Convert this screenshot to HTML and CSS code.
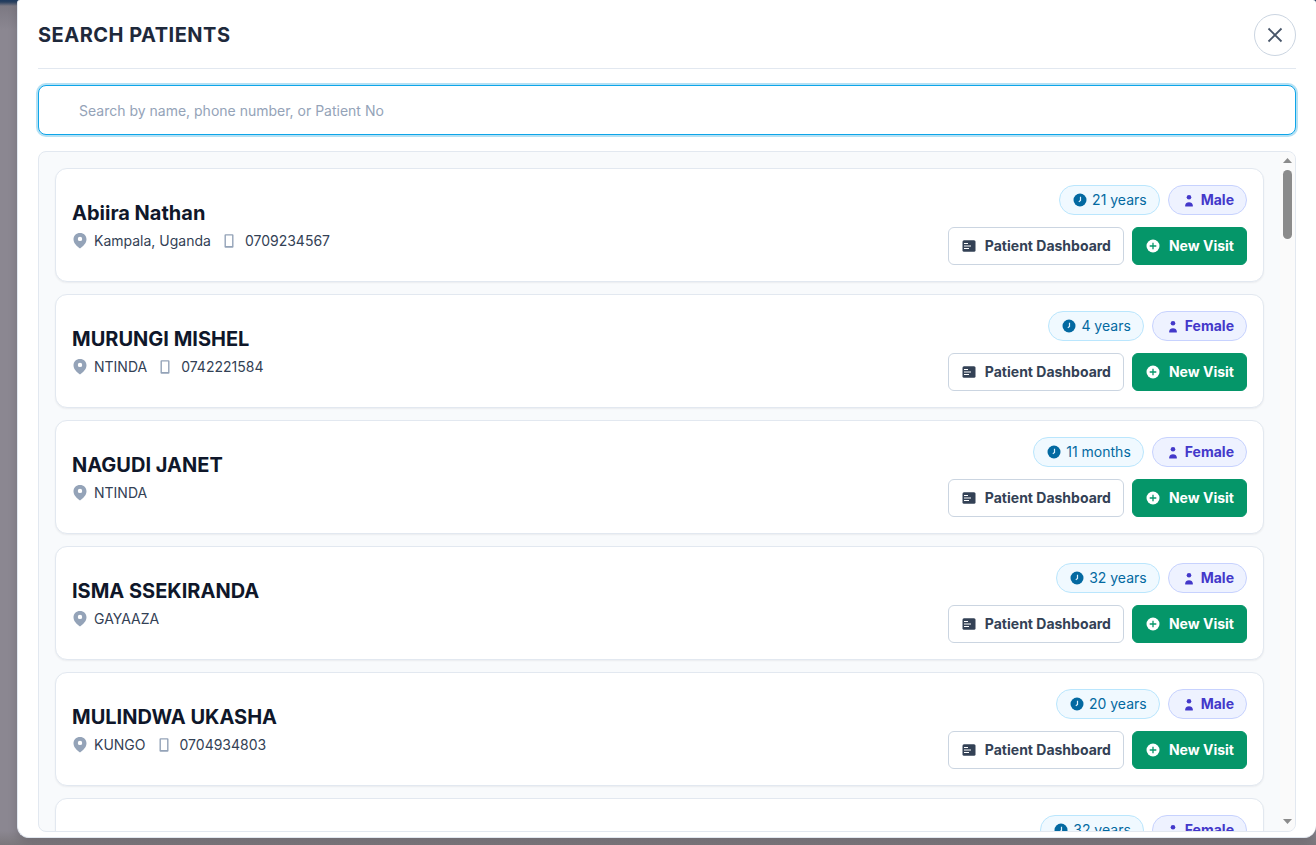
FILE: index.html
```html
<!DOCTYPE html>
<html lang="en">
<head>
<meta charset="utf-8">
<meta name="viewport" content="width=device-width, initial-scale=1">
<title>Search Patients</title>
<link rel="stylesheet" href="styles.css">
</head>
<body>
<svg class="sprite" aria-hidden="true">
  <symbol id="pin" viewBox="0 0 16 16"><path fill-rule="evenodd" d="M8 0C4.200 0 1.500 2.700 1.500 6.300C1.500 10 4.500 13 8 15.600C11.500 13 14.500 10 14.500 6.300C14.500 2.700 11.800 0 8 0ZM8 3.700A2.200 2.200 0 1 1 8 8.100A2.200 2.200 0 1 1 8 3.700Z" fill="currentColor"/></symbol>
  <symbol id="phone" viewBox="0 0 16 16"><path fill-rule="evenodd" d="M4.500 1.200h7a1 1 0 0 1 1 1v11.600a1 1 0 0 1-1 1h-7a1 1 0 0 1-1-1v-11.600a1 1 0 0 1 1-1ZM4.900 2.600v10.500h6.200V2.600Z" fill="currentColor"/></symbol>
  <symbol id="clock" viewBox="0 0 14 14"><circle cx="7" cy="7" r="6.500" fill="currentColor"/><path d="M7.500 3.800V7.500L5.800 8.700" fill="none" stroke="#e0f2fe" stroke-width="1.200"/></symbol>
  <symbol id="person" viewBox="0 0 14 14"><circle cx="7" cy="4.300" r="2.300" fill="currentColor"/><path d="M3.200 13.500v-1Q3.600 9.300 7 9.300T10.800 12.500V13.500Z" fill="currentColor"/></symbol>
  <symbol id="board" viewBox="0 0 14 14"><rect x="0.500" y="1.300" width="13" height="11.400" rx="1.500" fill="currentColor"/><path d="M2 4.500h4M2 7h7M2 9.500h5" stroke="#fff" stroke-width="1"/></symbol>
  <symbol id="plus" viewBox="0 0 14 14"><circle cx="7" cy="7" r="6.500" fill="#fff"/><path d="M7 3.700v6.600M3.700 7h6.600" stroke="#059669" stroke-width="1.300"/></symbol>
</svg>
<main class="modal" role="dialog" aria-labelledby="title">
  <header class="modal-header">
    <h1 id="title">SEARCH PATIENTS</h1>
    <button class="close" type="button" aria-label="Close"><svg viewBox="0 0 16 16"><path d="M1.500 1.500L14.500 14.500M14.500 1.500L1.500 14.500" fill="none" stroke="currentColor" stroke-width="1.800"/></svg></button>
  </header>
  <input class="search" type="text" aria-label="Search patients" placeholder="Search by name, phone number, or Patient No">
  <section class="results">
    <div class="scroller" id="list"></div>
    <div class="scrollbar" aria-hidden="true">
      <svg class="arrow" viewBox="0 0 9 5"><path d="M0 5L4.500 0L9 5Z"/></svg>
      <div class="track"><div class="thumb"></div></div>
      <svg class="arrow" viewBox="0 0 9 5"><path d="M0 0L4.500 5L9 0Z"/></svg>
    </div>
  </section>
</main>
<script src="app.js"></script>
</body>
</html>
```
FILE: app.js
```js
const patients = [
  ["Abiira Nathan", "Kampala, Uganda", "0709234567", "21 years", "Male"],
  ["MURUNGI MISHEL", "NTINDA", "0742221584", "4 years", "Female"],
  ["NAGUDI JANET", "NTINDA", "", "11 months", "Female"],
  ["ISMA SSEKIRANDA", "GAYAAZA", "", "32 years", "Male"],
  ["MULINDWA UKASHA", "KUNGO", "0704934803", "20 years", "Male"],
  ["", "", "", "32 years", "Female"]
];
const icon = (name) => `<svg class="icon ${name}" aria-hidden="true"><use href="#${name}"/></svg>`;
const meta = (name, text) => text ? `<span class="meta-item">${icon(name)}${text}</span>` : "";
document.getElementById("list").innerHTML = patients.map(([name, place, phone, age, sex]) => `
  <article class="card">
    <div class="info">
      <h2>${name}</h2>
      <div class="meta">${meta("pin", place)}${meta("phone", phone)}</div>
    </div>
    <div class="side">
      <div class="pills">
        <span class="pill age">${icon("clock")}${age}</span>
        <span class="pill sex">${icon("person")}${sex}</span>
      </div>
      <div class="actions">
        <button class="btn outline" type="button">${icon("board")}Patient Dashboard</button>
        <button class="btn solid" type="button">${icon("plus")}New Visit</button>
      </div>
    </div>
  </article>`).join("");
```
FILE: styles.css
```css
* { box-sizing: border-box; }
body {
  margin: 0;
  height: 100vh;
  padding: 0 0 7px 17px;
  overflow: hidden;
  display: flex;
  font: 14px/20px Inter, sans-serif;
  color: #334155;
  background: linear-gradient(#1e3a5f 0, #29405f 2px, #7c7983 6px, #8b8791 30px, #8b8791 calc(100% - 14px), #7b777c 100%);
}
.sprite { position: absolute; width: 0; height: 0; }
.modal {
  flex: 1;
  min-width: 0;
  display: flex;
  flex-direction: column;
  padding: 0 20px 5px;
  background: #fff;
  border: 1px solid #e2e8f0;
  border-top: 0;
  border-right: 0;
  border-radius: 3px 3px 12px 12px;
  box-shadow: 0 4px 10px rgba(0, 0, 0, 0.15);
}
.modal-header {
  display: flex;
  align-items: center;
  justify-content: space-between;
  padding: 14px 0 12px;
  border-bottom: 1px solid #e2e8f0;
}
h1 { margin: 0; font-size: 20px; line-height: 28px; font-weight: 700; letter-spacing: 0.5px; color: #1e293b; }
.close {
  display: grid;
  place-items: center;
  width: 42px;
  height: 42px;
  padding: 0;
  border: 1px solid #cbd5e1;
  border-radius: 50%;
  background: #fff;
  color: #475569;
}
.close svg { width: 16px; height: 16px; }
.search {
  width: 100%;
  height: 50px;
  flex: none;
  margin: 16px 0;
  padding: 0 40px;
  border: 1px solid #0ea5e9;
  border-radius: 8px;
  outline: 0;
  background: #fff;
  font: inherit;
  box-shadow: 0 0 0 2px #b5e1f4;
}
.search::placeholder { color: #94a3b8; opacity: 1; }
.results {
  flex: 1;
  min-height: 0;
  display: flex;
  overflow: hidden;
  border: 1px solid #e2e8f0;
  border-radius: 8px;
  background: #f8fafc;
}
.scroller {
  flex: 1;
  display: flex;
  flex-direction: column;
  gap: 12px;
  padding: 16px;
  overflow-y: auto;
  scrollbar-width: none;
}
.scrollbar {
  width: 15px;
  display: flex;
  flex-direction: column;
  align-items: center;
  padding: 6px 0 7px;
  background: #fafafa;
}
.arrow { width: 9px; height: 5px; fill: #8b8b8b; }
.track { flex: 1; padding: 7px 0; }
.thumb { width: 9px; height: 69px; border-radius: 5px; background: #8b8b8b; }
.card {
  flex: none;
  display: flex;
  align-items: center;
  justify-content: space-between;
  padding: 16px;
  border: 1px solid #e2e8f0;
  border-radius: 12px;
  background: #fff;
  box-shadow: 0 1px 2px rgba(15, 23, 42, 0.06);
}
h2 { margin: 0 0 4px; min-height: 28px; font-size: 20px; line-height: 28px; font-weight: 700; color: #0f172a; }
.meta { display: flex; gap: 10px; min-height: 20px; }
.meta-item { display: flex; align-items: center; gap: 6px; }
.meta .phone { margin-right: 2px; }
.icon { width: 14px; height: 14px; flex: none; }
.icon.pin, .icon.phone { width: 16px; height: 16px; color: #94a3b8; }
.side { display: flex; flex-direction: column; gap: 12px; align-items: flex-end; }
.pills, .actions { display: flex; gap: 8px; }
.pill {
  display: flex;
  align-items: center;
  gap: 5px;
  height: 30px;
  padding: 0 12px 0 13px;
  border: 1px solid;
  border-radius: 15px;
}
.age { background: #f0f9ff; border-color: #bae6fd; color: #0369a1; }
.sex { background: #eef2ff; border-color: #c7d2fe; color: #4338ca; font-weight: 700; }
.btn {
  display: flex;
  align-items: center;
  gap: 9px;
  height: 38px;
  padding: 0 12px 0 13px;
  border: 1px solid #cbd5e1;
  border-radius: 6px;
  background: #fff;
  color: #334155;
  font: inherit;
  font-weight: 700;
}
.solid { background: #059669; border-color: #059669; color: #fff; }
```
